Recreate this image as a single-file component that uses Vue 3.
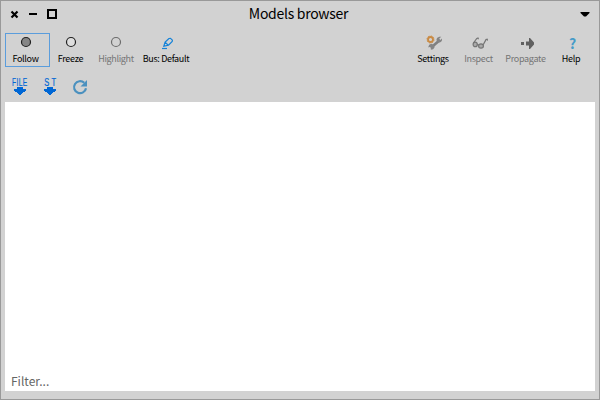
<script setup>
import { ref } from 'vue'

const mode = ref('follow')
</script>

<template>
  <main class="window">
    <header class="titlebar">
      <svg class="controls" width="60" height="26" viewBox="0 0 60 26" fill="none" stroke="#000">
        <path d="M11.5 11.5l6 6M17.5 11.5l-6 6" stroke-width="2.2" />
        <path d="M29 14h8" stroke-width="2" />
        <path d="M48 10h8v8h-8z" stroke-width="2" />
      </svg>
      <h1>Models browser</h1>
      <svg class="menu" width="60" height="26" viewBox="0 0 60 26"><path d="M40.5 12h9v1l-3.5 3.5h-2L40.5 13z" /></svg>
    </header>

    <nav class="toolbar">
      <button class="tool follow" :class="{ selected: mode === 'follow' }" @click="mode = 'follow'">
        <svg width="16" height="16" viewBox="0 0 16 16"><circle cx="8" cy="8" r="4.5" fill="#858585" stroke="#202020" stroke-width="1.2" /></svg>
        <span>Follow</span>
      </button>
      <button class="tool freeze" @click="mode = 'freeze'">
        <svg width="16" height="16" viewBox="0 0 16 16"><circle cx="8" cy="8" r="4.5" fill="#dedede" stroke="#202020" stroke-width="1.2" /></svg>
        <span>Freeze</span>
      </button>
      <button class="tool highlight" disabled>
        <svg width="16" height="16" viewBox="0 0 16 16"><circle cx="8" cy="8" r="4.5" fill="none" stroke="#6c6c6c" stroke-width="1.2" /></svg>
        <span>Highlight</span>
      </button>
      <button class="tool bus">
        <svg width="16" height="16" viewBox="0 0 16 16" fill="none" stroke="#1683d8" stroke-width="1.2">
          <path d="M7 8.3l3.9-3.8 1.6-.2 1.9 1.8-.2 1.4-3.7 3.7-4.7 1.1zM7 8.3l3.4 2.9" /><path d="M4 14.5h5" />
        </svg>
        <span>Bus: Default</span>
      </button>
      <i class="spacer"></i>
      <button class="tool settings">
        <svg width="18" height="16" viewBox="0 0 18 16" fill="none">
          <path d="M9 12l6-5.3" stroke="#808080" stroke-width="2.6" />
          <path d="M17.2 2.8l-2 2 1.2 1.1 1.6-1.4c.5 2.2-.8 4.3-3.2 3.9-2.2-.4-2.9-2.5-1.8-4.2 1-1.4 2.6-1.8 4.2-1.4z" fill="#858585" />
          <path d="M5.2 10.8l2-1 2.6 1 .8 2.4-1.4 2-2.3.6-.2-2.2-1.5-.7-1.1.7z" fill="#858585" />
          <circle cx="6.5" cy="5.5" r="2.5" stroke="#c98b45" stroke-width="1.9" />
          <circle cx="6.5" cy="5.5" r="3.6" stroke="#c98b45" stroke-width=".8" stroke-dasharray="1.4 1.4" />
        </svg>
        <span>Settings</span>
      </button>
      <button class="tool inspect" disabled>
        <svg width="18" height="16" viewBox="0 0 18 16" fill="#aaa" stroke="#757575" stroke-width="1.2">
          <ellipse cx="5.2" cy="10.4" rx="2.1" ry="2.3" /><ellipse cx="11" cy="12" rx="2.4" ry="2.2" />
          <path d="M3.4 9l3.4-4.5 1.2-.5.5 1.2M13.2 10.8L16 5.6l1.2-.4.5 1.4M7.2 10.3l1.5.8" fill="none" />
        </svg>
        <span>Inspect</span>
      </button>
      <button class="tool propagate" disabled>
        <svg width="16" height="16" viewBox="0 0 16 16" fill="#606060"><path d="M3 8h3v3H3zM8 7.5h3V4h1l4 4.5v2L12 15h-1v-3.5H8z" /></svg>
        <span>Propagate</span>
      </button>
      <button class="tool help">
        <b class="question">?</b>
        <span>Help</span>
      </button>
    </nav>

    <nav class="actions">
      <span class="action"><b class="tiny file">FILE</b><svg width="18" height="9" viewBox="0 0 18 9" shape-rendering="crispEdges"><path d="M6 0h6v2h3v2h-1v1h-2v1h-1v1h-1v1H8V7H7V6H6V5H4V4H3V2h3z" fill="#0067d5" /></svg></span>
      <span class="action"><b class="tiny st">ST</b><svg width="18" height="9" viewBox="0 0 18 9" shape-rendering="crispEdges"><path d="M6 0h6v2h3v2h-1v1h-2v1h-1v1h-1v1H8V7H7V6H6V5H4V4H3V2h3z" fill="#0067d5" /></svg></span>
      <svg width="18" height="18" viewBox="0 0 18 18">
        <path d="M13.2 4.8A6 6 0 1 0 15 10.2" fill="none" stroke="#4b91bf" stroke-width="2.2" />
        <path d="M16 2v6.5H9.5z" fill="#4b91bf" />
      </svg>
    </nav>

    <section class="content"><input aria-label="Filter" placeholder="Filter..." /></section>
  </main>
</template>

<style>
body { margin: 0; }
</style>

<style scoped>
* { box-sizing: border-box; }
.window { width: 600px; height: 400px; border: 1px solid #999; background: #d2d2d2; display: flex; flex-direction: column; padding: 0 4px 8px; font-family: "Noto Sans CJK SC", "Open Sans", sans-serif; }
.titlebar { height: 32px; margin: 0 -5px; display: flex; justify-content: space-between; }
.titlebar svg { margin-top: -1px; }
h1 { margin: 0 3px 0 0; font-size: 14px; line-height: 25px; font-weight: 400; letter-spacing: -.28px; color: #000; white-space: nowrap; }
.toolbar { height: 34px; display: flex; }
.tool { appearance: none; height: 34px; padding: 0; border: 1px solid transparent; background: none; display: flex; flex-direction: column; align-items: center; font-family: inherit; font-size: 9px; letter-spacing: -.32px; color: #000; flex: none; }
.tool:disabled { color: #757575; }
.tool svg { display: block; flex: none; }
.tool span { line-height: 14px; margin-top: 2px; white-space: nowrap; }
.selected { border-color: #5b9ddc; }
.follow { width: 45px; padding-right: 4px; }
.follow svg { margin-left: 1px; }
.freeze { width: 41px; }
.highlight { width: 50px; }
.bus { width: 50px; }
.spacer { flex: 1; }
.settings { width: 42px; }
.inspect { width: 49px; }
.propagate { width: 45px; }
.help { width: 47px; padding-right: 1px; }
.question { height: 16px; margin-left: 3px; font-size: 14px; line-height: 18px; font-weight: 700; color: #469bc8; }
.actions { height: 35px; padding: 11px 0 0 6px; display: flex; gap: 12px; }
.action { width: 18px; display: flex; flex-direction: column; align-items: center; }
.tiny { height: 9px; flex: none; font: 400 10px/9px "Liberation Sans", sans-serif; color: #0067d5; -webkit-text-stroke: .2px #0067d5; }
.tiny.file { letter-spacing: .6px; transform: scaleX(.66); }
.tiny.st { letter-spacing: 3px; transform: scaleX(.75); margin-left: 2px; }
.action svg { flex: none; }
.content { flex: 1; background: #fff; display: flex; align-items: flex-end; }
input { width: 100%; height: 21px; border: 0; outline: 0; padding: 0 6px 1px; background: transparent; font-family: inherit; font-size: 12px; }
input::placeholder { color: #656565; opacity: 1; }
</style>
